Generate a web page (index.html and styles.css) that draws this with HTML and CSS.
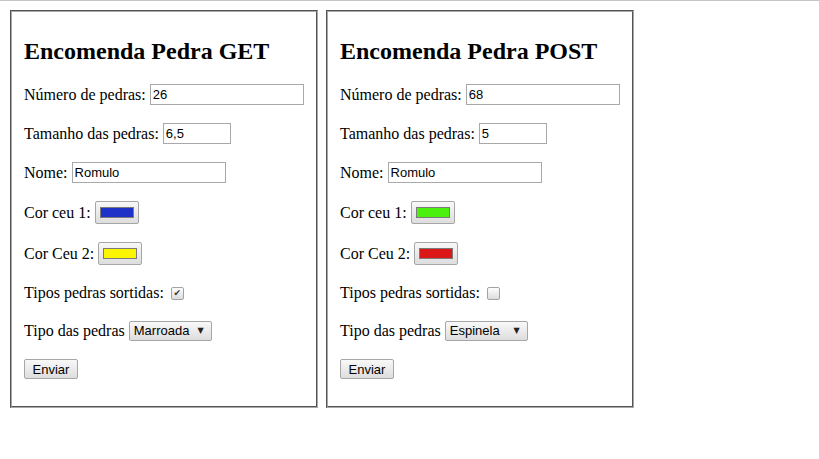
FILE: index.html
```html
<!DOCTYPE html>
<html lang="pt">
<head>
<meta charset="utf-8">
<title>Encomenda Pedra</title>
<link rel="stylesheet" href="styles.css">
</head>
<body>
<div class="topline"></div>
<div class="forms">
  <form class="order" method="get">
    <fieldset class="box">
      <h2 class="title">Encomenda Pedra GET</h2>
      <p class="row">Número de pedras: <input class="txt" type="text" value="26"></p>
      <p class="row">Tamanho das pedras: <input class="txt short" type="text" value="6,5"></p>
      <p class="row">Nome: <input class="txt" type="text" value="Romulo"></p>
      <p class="row tall">Cor ceu 1: <span class="colorbtn"><span class="swatch blue"></span></span></p>
      <p class="row tall">Cor Ceu 2: <span class="colorbtn"><span class="swatch yellow"></span></span></p>
      <p class="row low">Tipos pedras sortidas: <span class="check checked"></span></p>
      <p class="row low">Tipo das pedras <span class="select"><span class="sel-text">Marroada</span><span class="sel-arrow">▼</span></span></p>
      <p class="row low"><button class="btn" type="button">Enviar</button></p>
    </fieldset>
  </form>
  <form class="order" method="post">
    <fieldset class="box">
      <h2 class="title">Encomenda Pedra POST</h2>
      <p class="row">Número de pedras: <input class="txt" type="text" value="68"></p>
      <p class="row">Tamanho das pedras: <input class="txt short" type="text" value="5"></p>
      <p class="row">Nome: <input class="txt" type="text" value="Romulo"></p>
      <p class="row tall">Cor ceu 1: <span class="colorbtn"><span class="swatch green"></span></span></p>
      <p class="row tall">Cor Ceu 2: <span class="colorbtn"><span class="swatch red"></span></span></p>
      <p class="row low">Tipos pedras sortidas: <span class="check"></span></p>
      <p class="row low">Tipo das pedras <span class="select"><span class="sel-text">Espinela</span><span class="sel-arrow">▼</span></span></p>
      <p class="row low"><button class="btn" type="button">Enviar</button></p>
    </fieldset>
  </form>
</div>
</body>
</html>
```

FILE: styles.css
```css
html, body {
  margin: 0;
  padding: 0;
  background: #ffffff;
}
body {
  font-family: "Liberation Serif", "Times New Roman", serif;
  font-size: 16px;
  color: #000;
}
.topline {
  height: 1px;
  background: #c4c4c4;
}
.forms {
  display: flex;
  align-items: flex-start;
  gap: 8px;
  padding: 9px 10px 0 10px;
}
.order {
  margin: 0;
}
.box {
  margin: 0;
  width: 280px;
  padding: 6px 12px 10px 12px;
  border: 2px groove #a8a8a8;
  min-inline-size: 0;
}
.box .title {
  font-size: 24px;
  font-weight: bold;
  margin: 20px 0 18px 0;
  line-height: 27px;
}
.row {
  margin: 16px 0;
  line-height: 18px;
  height: 23px;
  display: flex;
  align-items: center;
  white-space: pre;
}
.row.tall {
  height: 25px;
}
.row.low {
  height: 22px;
}
.txt {
  box-sizing: border-box;
  width: 154px;
  height: 21px;
  margin: 0;
  padding: 1px 2px;
  border: 1px solid #a9a9a9;
  font-family: "Liberation Sans", Arial, sans-serif;
  font-size: 13px;
  color: #000;
  background: #fff;
  outline: none;
}
.txt.short {
  width: 68px;
}
.colorbtn {
  box-sizing: border-box;
  width: 44px;
  height: 23px;
  border: 1px solid #a6a6a6;
  border-radius: 2px;
  background: linear-gradient(#f8f8f8, #dddddd);
  display: flex;
  align-items: center;
  justify-content: center;
}
.swatch {
  box-sizing: border-box;
  width: 34px;
  height: 11px;
  border: 1px solid #7a7a7a;
}
.swatch.blue { background: #1f32c8; }
.swatch.yellow { background: #fbf500; }
.swatch.green { background: #4cf00f; }
.swatch.red { background: #dc1717; }
.check {
  box-sizing: border-box;
  margin-left: 3px;
  width: 13px;
  height: 13px;
  border: 1px solid #a3a3a3;
  border-radius: 2px;
  background: linear-gradient(#fdfdfd, #dcdcdc);
  display: flex;
  align-items: center;
  justify-content: center;
  font-family: "DejaVu Sans", sans-serif;
  font-size: 9px;
  line-height: 1;
  color: #333;
}
.check.checked::after {
  content: "✔";
}
.select {
  box-sizing: border-box;
  width: 83px;
  height: 20px;
  border: 1px solid #a6a6a6;
  border-radius: 2px;
  background: linear-gradient(#f8f8f8, #dddddd);
  display: flex;
  align-items: center;
  justify-content: space-between;
  padding: 0 7px 0 4px;
  font-family: "Liberation Sans", Arial, sans-serif;
  font-size: 13px;
}
.sel-arrow {
  font-family: "DejaVu Sans", sans-serif;
  font-size: 8px;
  color: #222;
}
.btn {
  box-sizing: border-box;
  width: 54px;
  height: 20px;
  padding: 0;
  border: 1px solid #a6a6a6;
  border-radius: 2px;
  background: linear-gradient(#f8f8f8, #dddddd);
  font-family: "Liberation Sans", Arial, sans-serif;
  font-size: 13px;
  color: #000;
}
```
